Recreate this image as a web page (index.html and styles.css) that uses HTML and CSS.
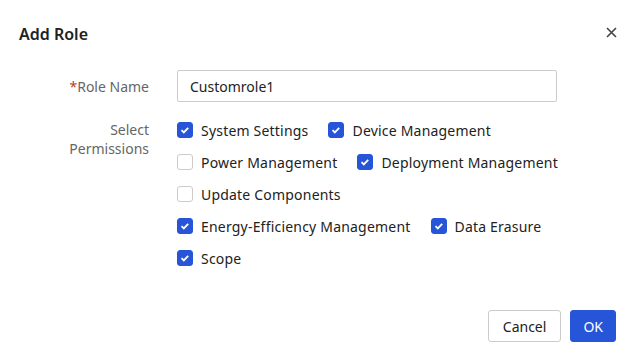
FILE: index.html
```html
<!DOCTYPE html>
<html lang="en">
<head>
  <meta charset="UTF-8" />
  <title>Add Role</title>
  <link rel="stylesheet" href="styles.css">
</head>
<body>
  <div class="dialog">
    <div class="header">
      <h2>Add Role</h2>
      <span class="close">
        <svg width="11" height="11" viewBox="0 0 11 11"><path d="M1 1L10 10M10 1L1 10" stroke="#444" stroke-width="1.6" /></svg>
      </span>
    </div>

    <div class="form">
      <div class="form-row">
        <label class="label"><span class="req">*</span>Role Name</label>
        <input class="text-input" type="text" value="Customrole1" />
      </div>

      <div class="form-row perms-row">
        <label class="label multi">Select<br>Permissions</label>
        <div class="perms">
          <div class="perm-line">
            <span class="check on">System Settings</span>
            <span class="check on">Device Management</span>
          </div>
          <div class="perm-line">
            <span class="check">Power Management</span>
            <span class="check on">Deployment Management</span>
          </div>
          <div class="perm-line">
            <span class="check">Update Components</span>
          </div>
          <div class="perm-line">
            <span class="check on">Energy-Efficiency Management</span>
            <span class="check on">Data Erasure</span>
          </div>
          <div class="perm-line">
            <span class="check on">Scope</span>
          </div>
        </div>
      </div>
    </div>

    <div class="footer">
      <button class="btn">Cancel</button>
      <button class="btn primary">OK</button>
    </div>
  </div>
</body>
</html>
```

FILE: styles.css
```css
body {
  margin: 0;
  font-family: "Noto Sans", "Open Sans", sans-serif;
  background: #fff;
  color: #222;
}

.dialog {
  width: 638px;
  height: 361px;
  box-sizing: border-box;
  padding: 24px 22px 0 15px;
}

.header {
  display: flex;
  justify-content: space-between;
  align-items: center;
  height: 20px;
  padding-left: 4px;
}

h2 {
  margin: 0;
  font-size: 16px;
  font-weight: 600;
  color: #222;
}

.close {
  display: flex;
  margin-right: -1px;
  margin-bottom: 4px;
}

.form {
  margin-top: 26px;
}

.form-row {
  display: flex;
  align-items: center;
}

.label {
  width: 134px;
  flex: none;
  text-align: right;
  font-size: 14px;
  color: #666;
  margin-right: 28px;
}

.req {
  color: #c0392b;
}

.text-input {
  width: 380px;
  height: 32px;
  box-sizing: border-box;
  border: 1px solid #ccc;
  border-radius: 2px;
  padding: 0 12px;
  font-family: inherit;
  font-size: 14px;
  color: #222;
  outline: none;
}

.perms-row {
  align-items: flex-start;
  margin-top: 12px;
}

.label.multi {
  line-height: 19px;
  padding-top: 6px;
}

.perm-line {
  display: flex;
  align-items: center;
  height: 32px;
  gap: 20px;
}

.check {
  display: flex;
  align-items: center;
  font-size: 14px;
  letter-spacing: 0.2px;
  color: #222;
}

.check::before {
  content: "";
  width: 16px;
  height: 16px;
  box-sizing: border-box;
  border: 1px solid #ccc;
  border-radius: 3px;
  margin-right: 8px;
  background: #fff;
}

.check.on::before {
  border-color: #2755d8;
  background: #2755d8 url("data:image/svg+xml,%3Csvg xmlns='http://www.w3.org/2000/svg' width='16' height='16'%3E%3Cpath d='M4.5 8.2l2.3 2.2 4.4-4.6' fill='none' stroke='white' stroke-width='1.8'/%3E%3C/svg%3E") center no-repeat;
}

.footer {
  display: flex;
  justify-content: flex-end;
  gap: 9px;
  margin-top: 36px;
}

.btn {
  height: 32px;
  padding: 0 14px;
  font-family: inherit;
  font-size: 14px;
  color: #222;
  background: #fff;
  border: 1px solid #ccc;
  border-radius: 3px;
  cursor: pointer;
}

.btn.primary {
  background: #2755d8;
  border-color: #2755d8;
  color: #fff;
  padding: 0 12px;
}
```
